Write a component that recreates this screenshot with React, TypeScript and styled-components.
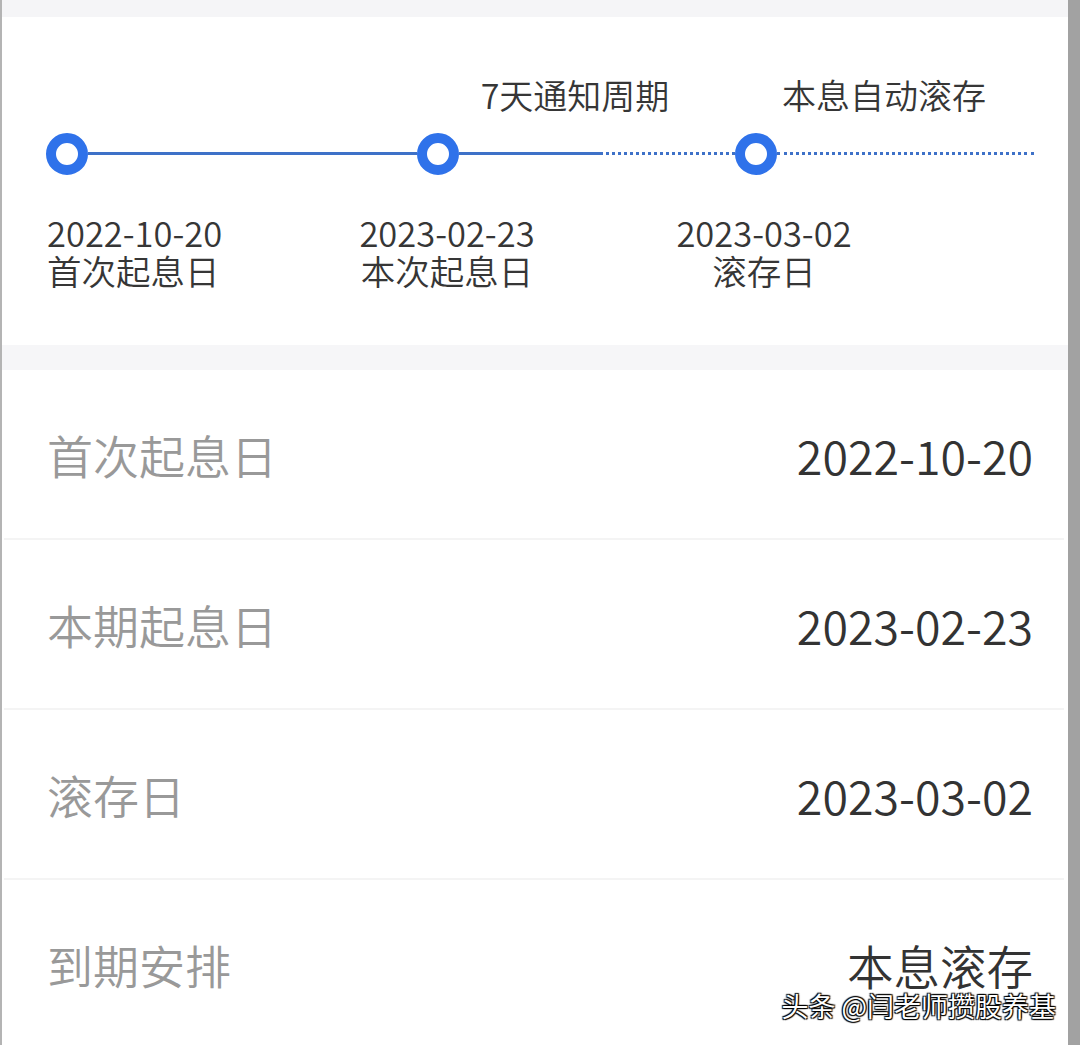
import React from 'react';
import styled, { createGlobalStyle } from 'styled-components';

const GlobalStyle = createGlobalStyle`
  html, body {
    margin: 0;
    padding: 0;
    background: #f5f5f7;
    font-family: "Noto Sans CJK SC", "Noto Sans", sans-serif;
  }
  #root {
    height: 1045px;
    overflow: hidden;
  }
`;

const Frame = styled.div`
  position: relative;
  height: 1045px;
  border-left: 2px solid #b4b4b4;
  border-right: 12px solid #a2a2a2;
  background: #f5f5f7;
  padding-top: 17px;
  box-sizing: border-box;
  font-weight: 350;
`;

const TimelineCard = styled.section`
  background: #ffffff;
  height: 328px;
  box-sizing: border-box;
  padding: 58px 34px 0 44px;
  color: #363636;
`;

const TopLabels = styled.div`
  display: flex;
  height: 40px;
  padding-left: 409px;
`;

const TopLabel = styled.div<{ $gap?: number }>`
  width: 240px;
  margin-left: ${p => p.$gap ?? 0}px;
  text-align: center;
  font-size: 34px;
  line-height: 40px;
  white-space: nowrap;
`;

const Track = styled.div`
  display: flex;
  align-items: center;
  height: 43px;
  margin-top: 17px;
`;

const Dot = styled.span`
  flex: none;
  width: 42px;
  height: 42px;
  border-radius: 50%;
  background: #ffffff;
  border: 10px solid #2f72ea;
  box-sizing: border-box;
`;

const Segment = styled.span<{ $width?: number; $dotted?: boolean }>`
  flex: ${p => (p.$width ? `none` : `1`)};
  width: ${p => (p.$width ? `${p.$width}px` : 'auto')};
  height: 0;
  border-top: ${p => (p.$dotted ? '3px dotted #3e71c8' : '3px solid #3e71c8')};
`;

const BottomLabels = styled.div`
  display: flex;
  margin-top: 38px;
`;

const Stop = styled.div<{ $gap: number; $align: 'left' | 'center' }>`
  width: 200px;
  margin-left: ${p => p.$gap}px;
  text-align: ${p => p.$align};
  font-size: 34.5px;
  white-space: nowrap;
`;

const StopLine = styled.div`
  height: 38px;
  line-height: 38px;
`;

const Divider = styled.div`
  height: 25px;
  background: #f6f6f8;
`;

const List = styled.section`
  background: #ffffff;
`;

const Row = styled.div`
  display: flex;
  align-items: center;
  justify-content: space-between;
  height: 168px;
  padding: 0 31px 0 43px;
  border-bottom: 2px solid #f4f4f4;
  margin: 0 4px 0 2px;
`;

const Label = styled.span`
  font-size: 46px;
  color: #999999;
`;

const Value = styled.span`
  font-size: 46.5px;
  color: #333333;
`;

const Watermark = styled.div`
  position: absolute;
  right: 12px;
  top: 990px;
  font-size: 27px;
  line-height: 32px;
  font-weight: 400;
  color: #ffffff;
  white-space: nowrap;
  text-shadow:
    1px 1px 1px #000,
    -1px -1px 1px #000,
    1px -1px 1px #000,
    -1px 1px 1px #000;
`;

const rows = [
  { label: '首次起息日', value: '2022-10-20' },
  { label: '本期起息日', value: '2023-02-23' },
  { label: '滚存日', value: '2023-03-02' },
  { label: '到期安排', value: '本息滚存' },
];

const stops = [
  { date: '2022-10-20', name: '首次起息日', gap: 1, align: 'left' as const },
  { date: '2023-02-23', name: '本次起息日', gap: 100, align: 'center' as const },
  { date: '2023-03-02', name: '滚存日', gap: 117, align: 'center' as const },
];

export default function App() {
  return (
    <>
      <GlobalStyle />
      <Frame>
        <TimelineCard>
          <TopLabels>
            <TopLabel>7天通知周期</TopLabel>
            <TopLabel $gap={69}>本息自动滚存</TopLabel>
          </TopLabels>
          <Track>
            <Dot />
            <Segment $width={329} />
            <Dot />
            <Segment $width={141} />
            <Segment $width={135} $dotted />
            <Dot />
            <Segment $dotted />
          </Track>
          <BottomLabels>
            {stops.map(s => (
              <Stop key={s.date} $gap={s.gap} $align={s.align}>
                <StopLine>{s.date}</StopLine>
                <StopLine>{s.name}</StopLine>
              </Stop>
            ))}
          </BottomLabels>
        </TimelineCard>
        <Divider />
        <List>
          {rows.map(r => (
            <Row key={r.label}>
              <Label>{r.label}</Label>
              <Value>{r.value}</Value>
            </Row>
          ))}
        </List>
        <Watermark>头条 @闫老师攒股养基</Watermark>
      </Frame>
    </>
  );
}
